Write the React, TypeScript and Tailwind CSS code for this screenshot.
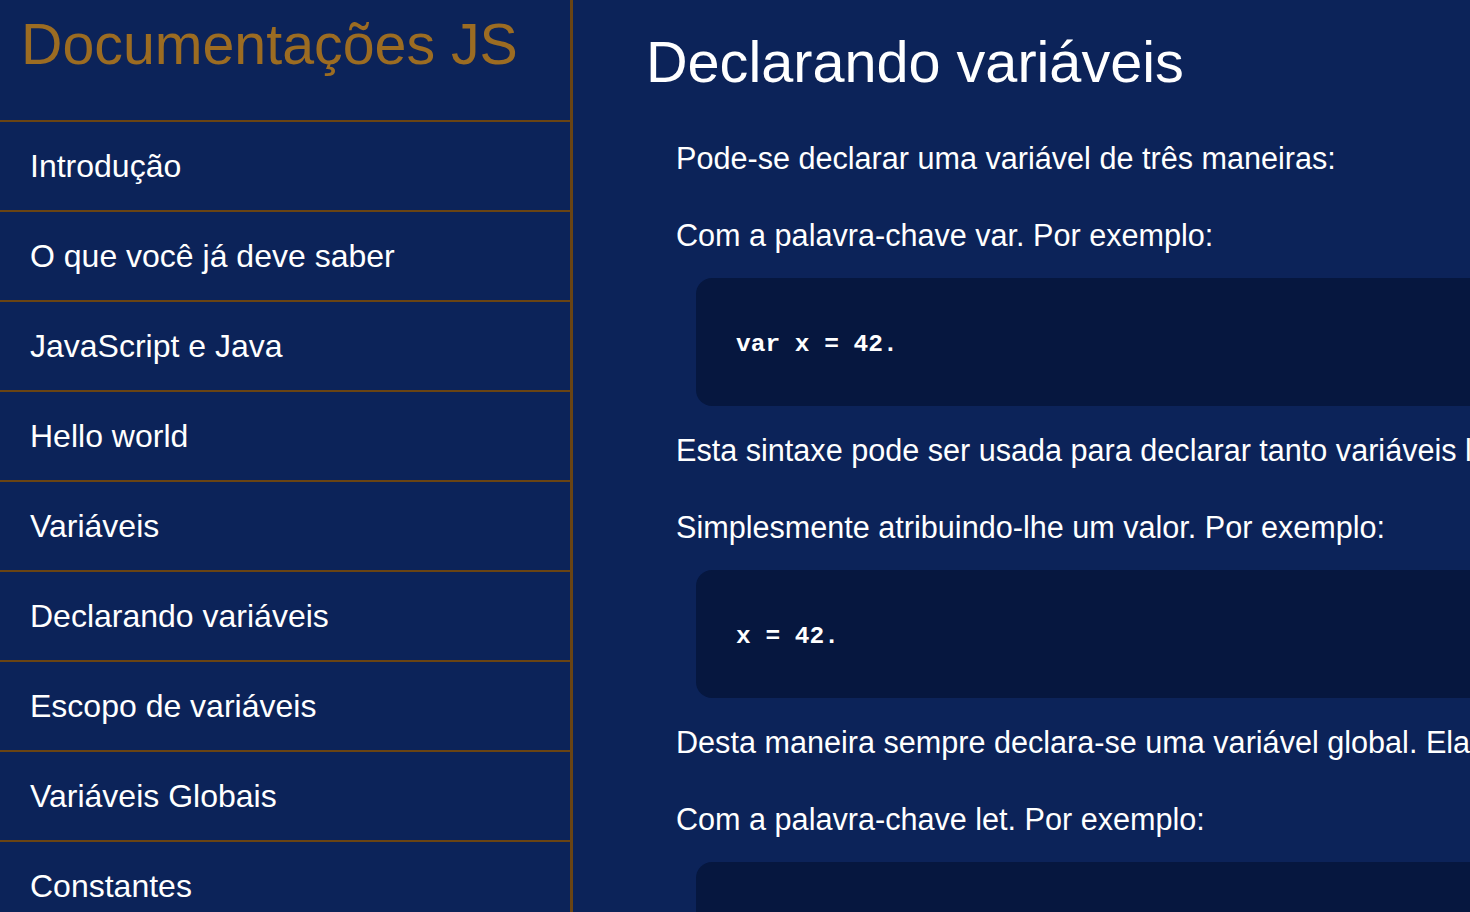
const navItems = [
  "Introdução",
  "O que você já deve saber",
  "JavaScript e Java",
  "Hello world",
  "Variáveis",
  "Declarando variáveis",
  "Escopo de variáveis",
  "Variáveis Globais",
  "Constantes",
  "Tipos de dados",
]

const Paragraph = ({ children, className = "" }: { children: string; className?: string }) => (
  <p className={`ml-[103px] whitespace-nowrap text-[30.6px] leading-[34px] ${className}`}>{children}</p>
)

const CodeBlock = ({ code, className = "" }: { code: string; className?: string }) => (
  <div
    className={`ml-[123px] flex h-[128px] w-[1200px] shrink-0 items-center rounded-[16px] bg-[#06173f] pl-[40px] pt-[6px] ${className}`}
  >
    <code className="whitespace-pre font-['Liberation_Mono',monospace] text-[24.5px] font-bold text-white">
      {code}
    </code>
  </div>
)

export default function App() {
  return (
    <div className="flex h-[912px] w-[1470px] overflow-hidden bg-[#0c2359] font-['Liberation_Sans',Arial,sans-serif] text-white">
      <nav className="flex h-full w-[573px] shrink-0 flex-col border-r-[3px] border-[#6a4413]">
        <header className="flex h-[122px] shrink-0 items-start border-b-2 border-[#6a4413] pl-[21px] pt-[8px]">
          <h1 className="text-[57.3px] leading-[72px] text-[#9c6c22]">Documentações JS</h1>
        </header>
        <ul className="flex flex-col">
          {navItems.map((item) => (
            <li
              key={item}
              className="flex h-[90px] shrink-0 items-center border-b-2 border-[#6a4413] pl-[30px] text-[32px]"
            >
              {item}
            </li>
          ))}
        </ul>
      </nav>

      <main className="flex min-w-0 flex-1 flex-col overflow-hidden">
        <h2 className="ml-[73px] mt-[26px] whitespace-nowrap text-[57.6px] leading-[72px]">Declarando variáveis</h2>
        <Paragraph className="mt-[43px]">Pode-se declarar uma variável de três maneiras:</Paragraph>
        <Paragraph className="mt-[43px]">Com a palavra-chave var. Por exemplo:</Paragraph>
        <CodeBlock code="var x = 42." className="mt-[26px]" />
        <Paragraph className="mt-[27px]">
          Esta sintaxe pode ser usada para declarar tanto variáveis locais como globais.
        </Paragraph>
        <Paragraph className="mt-[43px]">Simplesmente atribuindo-lhe um valor. Por exemplo:</Paragraph>
        <CodeBlock code="x = 42." className="mt-[26px]" />
        <Paragraph className="mt-[27px]">
          Desta maneira sempre declara-se uma variável global. Ela gera um aviso de estrito do JavaScript.
        </Paragraph>
        <Paragraph className="mt-[43px]">Com a palavra-chave let. Por exemplo:</Paragraph>
        <CodeBlock code="let y = 13." className="mt-[26px]" />
      </main>
    </div>
  )
}
